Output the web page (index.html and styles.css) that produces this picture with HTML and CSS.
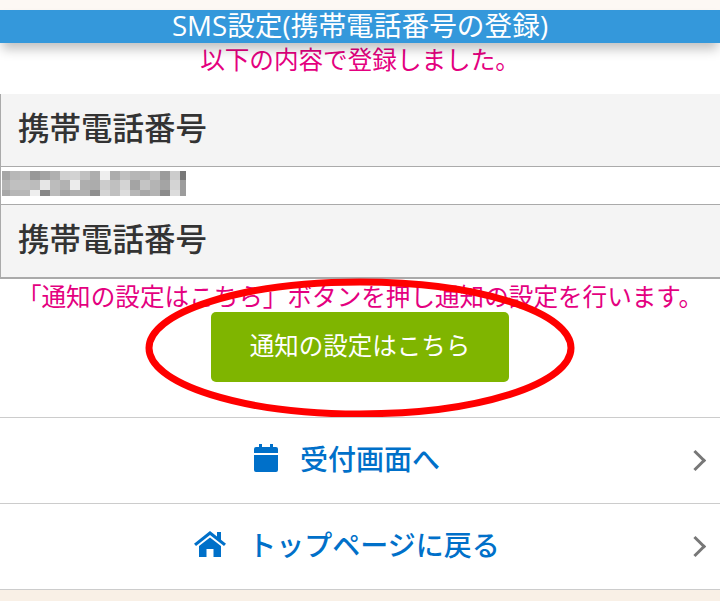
FILE: index.html
```html
<!DOCTYPE html>
<html lang="ja">

<head>
  <meta charset="UTF-8">
  <meta name="viewport" content="width=device-width, initial-scale=1.0">
  <title>SMS設定(携帯電話番号の登録)</title>
  <link rel="stylesheet" href="styles.css">
</head>

<body>
  <h1 class="title">SMS設定(携帯電話番号の登録)</h1>
  <main class="page">
    <p class="msg msg-done">以下の内容で登録しました。</p>
    <div class="info">
      <div class="info-head">携帯電話番号</div>
      <div class="info-value">
        <svg class="mosaic" width="184" height="25" viewBox="0 0 184 25" shape-rendering="crispEdges" aria-hidden="true">
          <g id="mosaic-rows"></g>
        </svg>
      </div>
      <div class="info-head">携帯電話番号</div>
    </div>
    <p class="msg msg-guide">「通知の設定はこちら」ボタンを押し通知の設定を行います。</p>
    <div class="action">
      <a class="btn" href="#">通知の設定はこちら</a>
      <svg class="ring" width="432" height="140" viewBox="0 0 432 140" aria-hidden="true">
        <ellipse cx="216" cy="70" rx="211" ry="66" fill="none" stroke="#f00" stroke-width="7" />
      </svg>
    </div>
    <nav class="menu">
      <a class="menu-item" href="#">
        <svg class="ico" width="24" height="28" viewBox="0 0 24 28" aria-hidden="true">
          <path fill="#0070c9" d="M5 0h3v4H5zM16 0h3v4h-3zM2 3h20a2 2 0 0 1 2 2v4H0V5a2 2 0 0 1 2-2zM0 11h24v15a2 2 0 0 1-2 2H2a2 2 0 0 1-2-2z" />
        </svg>
        <span>受付画面へ</span>
      </a>
      <a class="menu-item" href="#">
        <svg class="ico" width="32" height="26" viewBox="0 0 32 26" aria-hidden="true">
          <path fill="#0070c9" d="M16 0l7 5.500V1h4v7.700l5 4-2 2.300L16 4 2 15l-2-2.300zM16 6.500l11 8.600V26h-7.500v-8h-7v8H5V15.100z" />
        </svg>
        <span>トップページに戻る</span>
      </a>
    </nav>
    <div class="foot"></div>
  </main>
  <script>
    // モザイク部分 (電話番号を隠している)
    var rows = [
      ["a6", "b8", "bc", "98", "a4", "b0", "d0", "d2", "c0", "ae", "ee", "ac", "c0", "b6", "b4", "c0", "9c", "cc", "78"],
      ["b4", "c0", "c0", "bc", "e6", "bc", "b2", "ec", "ae", "ac", "cc", "c0", "d4", "a4", "c4", "b4", "a4", "d4", "9c"],
      ["a8", "b6", "b8", "ee", "88", "bc", "a6", "b0", "b2", "90", "d4", "c0", "dc", "b6", "a8", "b4", "8c", "dc", "9c"]
    ];
    var tops = [0, 9, 19];
    var heights = [9, 10, 6];
    var g = document.getElementById("mosaic-rows");
    rows.forEach(function (row, r) {
      row.forEach(function (c, i) {
        var rect = document.createElementNS("http://www.w3.org/2000/svg", "rect");
        rect.setAttribute("x", i == 0 ? 0 : i * 10 - 2);
        rect.setAttribute("y", tops[r]);
        rect.setAttribute("width", i == 0 ? 8 : 10);
        rect.setAttribute("height", heights[r]);
        rect.setAttribute("fill", "#" + c + c + c);
        g.appendChild(rect);
      });
    });
  </script>
</body>

</html>
```

FILE: styles.css
```css
body,
html {
  padding: 0;
  margin: 0;
}

body {
  background: #fdf8f4;
  font-family: "Noto Sans CJK JP", "Open Sans", sans-serif;
  padding-top: 10px;
}

a {
  text-decoration: none;
}

.title {
  position: relative;
  z-index: 2;
  height: 33px;
  margin: 0;
  background: #3498db;
  box-shadow: 0 8px 12px -2px rgba(0, 0, 0, 0.25);
  color: #fff;
  font-family: "Open Sans", "Noto Sans CJK JP", sans-serif;
  font-size: 27.7px;
  font-weight: 400;
  line-height: 30px;
  text-align: center;
}

.page {
  background: #fff;
}

.msg {
  margin: 0;
  color: #e4007f;
  font-size: 24.6px;
  text-align: center;
}

.msg-done {
  height: 51px;
  line-height: 31px;
}

.info {
  border-left: 1px solid #aaa;
  border-bottom: 2px solid #aaa;
}

.info-head {
  height: 72px;
  padding-left: 17px;
  background: #f4f4f4;
  color: #333;
  font-size: 31.5px;
  font-weight: 500;
  line-height: 65px;
}

.info-value {
  height: 39px;
  padding: 4px 0 0 1px;
  box-sizing: border-box;
  border-top: 1px solid #aaa;
  border-bottom: 1px solid #aaa;
  background: #fff;
}

.mosaic {
  display: block;
}

.msg-guide {
  height: 33px;
  line-height: 32px;
  white-space: nowrap;
}

.action {
  position: relative;
  display: flex;
  justify-content: center;
  padding-bottom: 35px;
}

.btn {
  display: block;
  width: 298px;
  height: 70px;
  background: #7fb500;
  border-radius: 5px;
  color: #fff;
  font-size: 24.5px;
  line-height: 66px;
  text-align: center;
}

.ring {
  position: absolute;
  top: -34px;
  left: 144px;
}

.menu-item {
  position: relative;
  display: flex;
  align-items: center;
  justify-content: center;
  height: 80px;
  padding: 0 26px 5px 0;
  border-top: 1px solid #ccc;
  color: #0070c9;
  font-size: 28px;
  font-weight: 500;
}

.menu-item::after {
  content: "";
  position: absolute;
  top: 35px;
  right: 17px;
  width: 12px;
  height: 12px;
  border-top: 3px solid #777;
  border-right: 3px solid #777;
  transform: rotate(45deg);
}

.ico {
  flex: none;
  margin-right: 22px;
}

.foot {
  height: 12px;
  border-top: 1px solid #ccc;
  background: #f9f0e6;
}
```
